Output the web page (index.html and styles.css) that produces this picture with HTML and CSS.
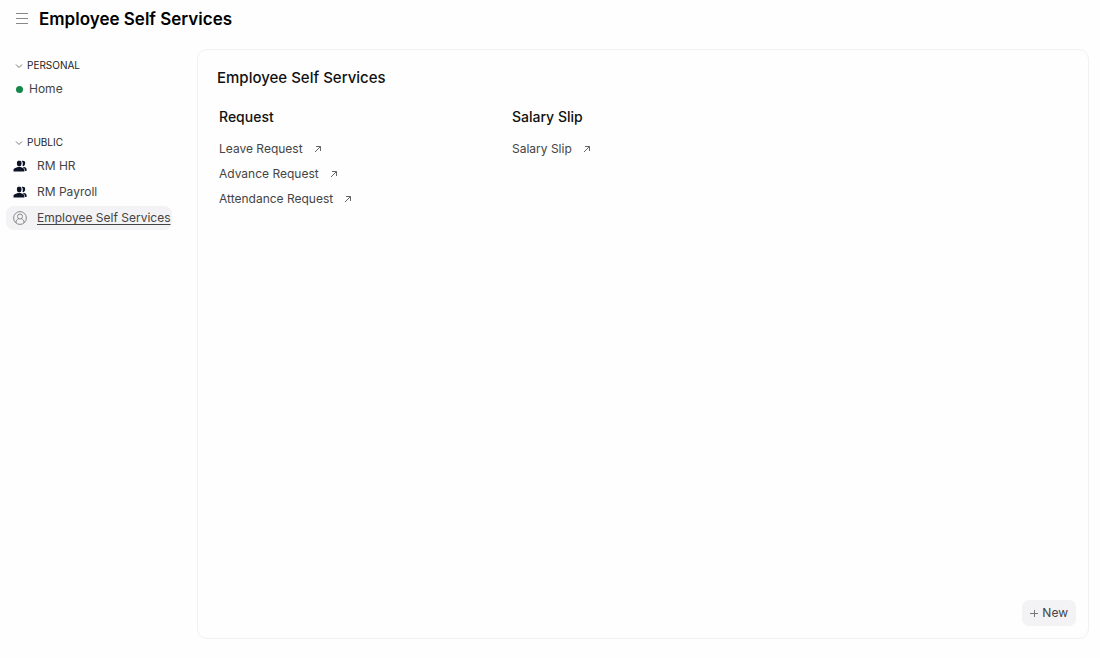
FILE: index.html
```html
<!DOCTYPE html>
<html lang="en">
<head>
<meta charset="utf-8">
<title>Employee Self Services</title>
<link rel="stylesheet" href="styles.css">
</head>
<body>
<svg class="defs" aria-hidden="true">
  <symbol id="chevron" viewBox="0 0 8 8"><path d="M1 2.5 4 5.5 7 2.5" fill="none" stroke="currentColor"/></symbol>
  <symbol id="arrow" viewBox="0 0 8 8"><path d="M1 7 6.500 1.500M2 1.500h4.500v4.500" fill="none" stroke="currentColor"/></symbol>
  <symbol id="users" viewBox="0 0 14 12"><path fill="currentColor" d="M5.2.8h2a2 2 0 0 1 1.3 2v1.300a2.300 2.300 0 0 1-4.600 0V3A2.200 2.200 0 0 1 5.200.8ZM.5 11.500V9.800c0-1.200 1.200-1.700 3.100-2.300l1.200-.5h2.800l1.200.5c1.700.6 2.600 1.100 2.600 2.300v1.700ZM8.700 1c2.400-.5 3.500.5 3.500 2.100 0 1.500-.7 2.900-1.900 3.100l-.8-.5c.5-1.700.6-3.300-.8-4.700ZM9.700 7.200l1.200-.3c1.700.4 2.700 1.100 2.700 2.200v1.900h-1.500c.1-1.900-.6-3-2.400-3.800Z"/></symbol>
</svg>
<header class="topbar">
  <button class="menu" type="button" aria-label="Toggle sidebar">
    <svg width="12" height="14" viewBox="0 0 12 14"><path d="M0 1.500h12M0 6.500h12M0 11.500h12" stroke="currentColor"/></svg>
  </button>
  <h1 class="title">Employee Self Services</h1>
</header>
<div class="layout">
  <nav class="sidebar" aria-label="Workspaces">
    <section class="group">
      <button class="group-toggle" type="button"><svg width="8" height="8"><use href="#chevron"/></svg>PERSONAL</button>
      <a class="item item-home" href="#"><span class="dot"></span>Home</a>
    </section>
    <section class="group">
      <button class="group-toggle" type="button"><svg width="8" height="8"><use href="#chevron"/></svg>PUBLIC</button>
      <a class="item" href="#"><svg class="users" width="14" height="12"><use href="#users"/></svg>RM HR</a>
      <a class="item" href="#"><svg class="users" width="14" height="12"><use href="#users"/></svg>RM Payroll</a>
      <a class="item item-active" href="#" aria-current="page"><svg width="14" height="14" viewBox="0 0 14 14" fill="none" stroke="currentColor"><circle cx="7" cy="7" r="6.400"/><circle cx="7" cy="5.500" r="2.500"/><path d="M3 12V11c0-1.700 1-2.500 2.500-3M11 12V11c0-1.700-1-2.500-2.500-3"/></svg><span class="label">Employee Self Services</span></a>
    </section>
  </nav>
  <main class="card">
    <h2 class="card-title">Employee Self Services</h2>
    <div class="columns">
      <section class="links">
        <h3 class="links-title">Request</h3>
        <a class="link" href="#">Leave Request<svg width="8" height="8"><use href="#arrow"/></svg></a>
        <a class="link" href="#">Advance Request<svg width="8" height="8"><use href="#arrow"/></svg></a>
        <a class="link" href="#">Attendance Request<svg width="8" height="8"><use href="#arrow"/></svg></a>
      </section>
      <section class="links">
        <h3 class="links-title">Salary Slip</h3>
        <a class="link" href="#">Salary Slip<svg width="8" height="8"><use href="#arrow"/></svg></a>
      </section>
    </div>
    <button class="new" type="button"><svg width="8" height="8" viewBox="0 0 8 8"><path d="M0 4.500h8M4.500 1v7" stroke="#777" fill="none"/></svg>New</button>
  </main>
</div>
</body>
</html>
```
FILE: styles.css
```css
* { box-sizing: border-box; }
body {
  margin: 0;
  min-height: 100vh;
  display: flex;
  flex-direction: column;
  background: #fefefe;
  color: #444;
  font: 12px/20px Inter, sans-serif;
}
h1, h2, h3 { margin: 0; color: #111; }
button { border: 0; background: none; padding: 0; font: inherit; color: inherit; }
a { color: inherit; text-decoration: none; }
svg { flex: none; }
.defs { position: absolute; width: 0; height: 0; }
.topbar { display: flex; align-items: center; gap: 11px; height: 38px; padding-left: 16px; }
.menu { display: flex; color: #888; }
.title { font-size: 17px; font-weight: 600; line-height: 24px; color: #000; }
.layout {
  flex: 1;
  display: grid;
  grid-template-columns: 166px 1fr;
  gap: 25px;
  padding: 11px 11px 19px 6px;
}
.sidebar { padding-top: 6px; }
.group { display: flex; flex-direction: column; align-items: stretch; gap: 2px; margin-bottom: 31px; }
.group-toggle { display: flex; align-items: center; gap: 4px; padding-left: 9px; font-size: 10px; color: #222; line-height: 20px; }
.group-toggle svg { color: #777; margin-top: 2px; }
.item { display: flex; align-items: center; gap: 10px; height: 24px; padding-left: 7px; border-radius: 8px; white-space: nowrap; }
.item-home { gap: 6px; padding-left: 10px; }
.dot { width: 7px; height: 7px; border-radius: 50%; background: #16874a; }
.users { color: #0c1426; }
.item-active { background: #f3f2f4; }
.item-active svg { color: #888; }
.label { text-decoration: underline; text-underline-offset: 2px; }
.card { display: flex; flex-direction: column; border: 1px solid #f1f0f3; border-radius: 10px; padding: 16px 12px 12px 19px; }
.card-title { font-size: 15px; font-weight: 500; line-height: 24px; }
.columns { display: grid; grid-template-columns: repeat(3, 1fr); column-gap: 22px; padding: 17px 0 0 2px; }
.links { display: flex; flex-direction: column; align-items: flex-start; gap: 5px; }
.links-title { font-size: 14px; font-weight: 500; line-height: 20px; margin-bottom: 7px; }
.link { display: flex; align-items: center; gap: 11px; }
.link svg { color: #666; }
.new { display: flex; align-items: center; gap: 4px; margin: auto 0 0 auto; height: 26px; padding: 0 8px; border-radius: 7px; background: #f3f2f4; }
```
